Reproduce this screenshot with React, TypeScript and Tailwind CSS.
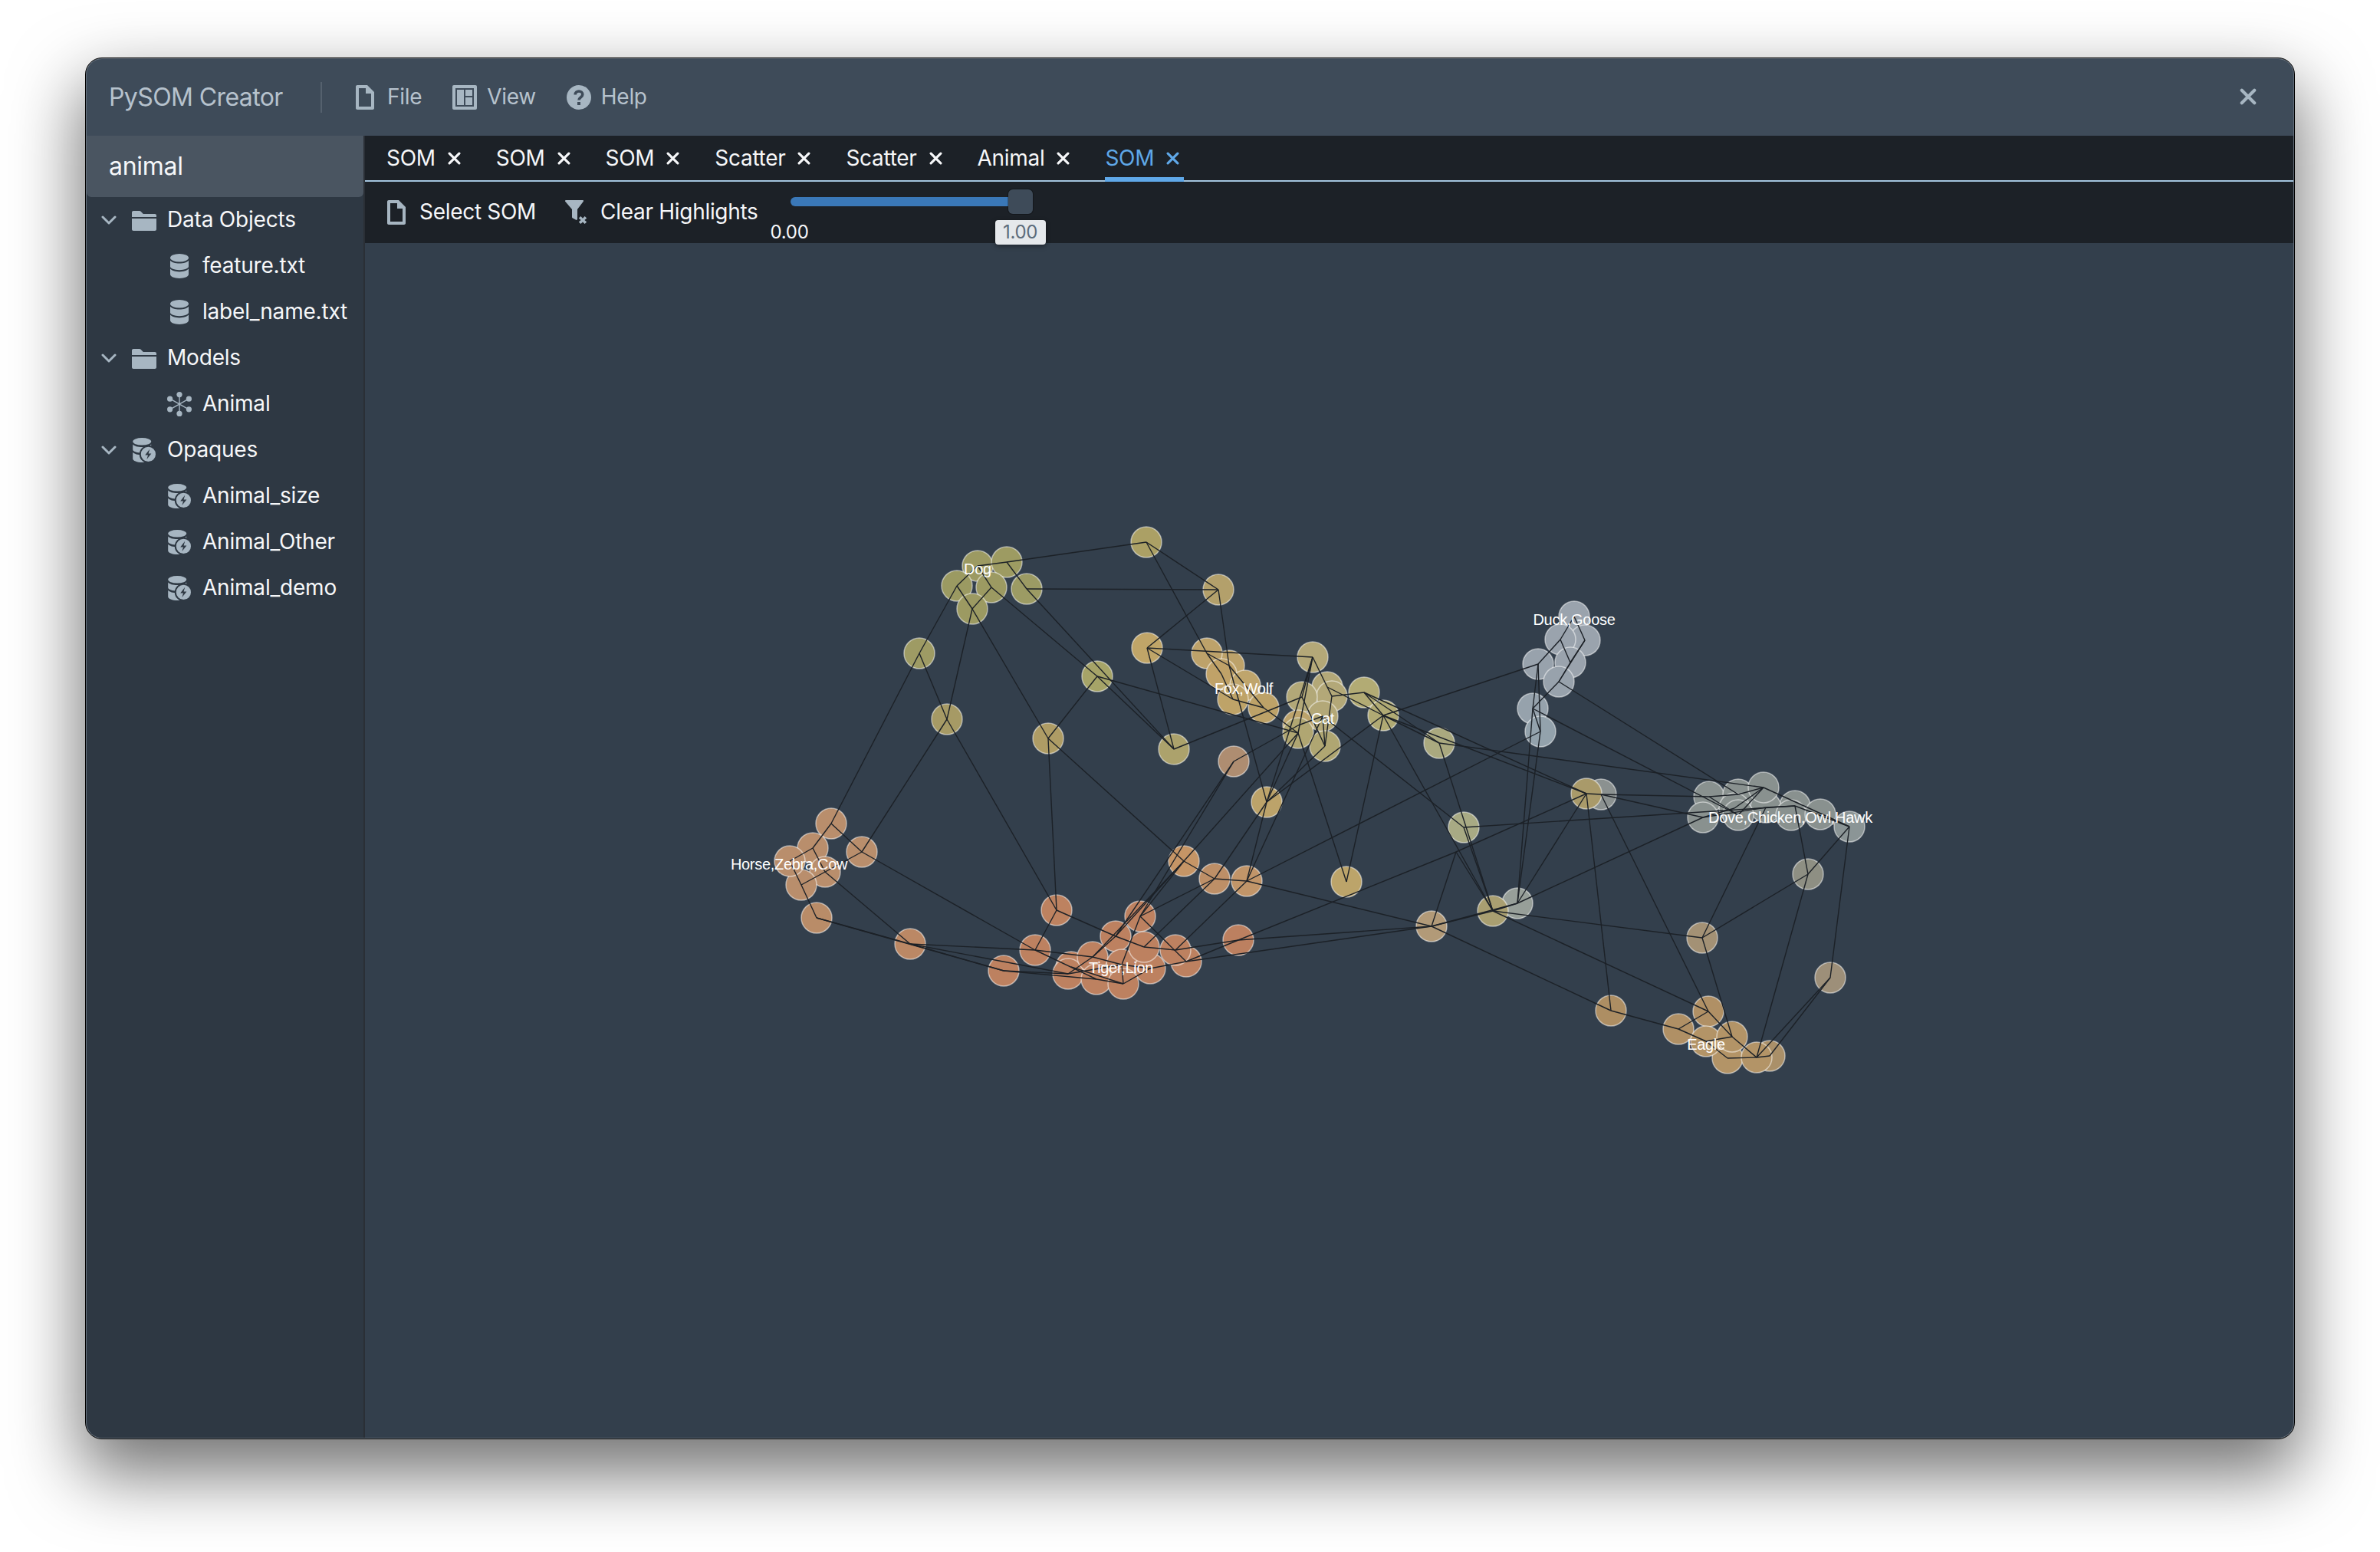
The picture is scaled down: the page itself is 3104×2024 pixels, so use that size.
import React from "react";

const nodes: Record<string, [number, number, string]> = {
  a: [1275, 737, "#9c9a62"], b: [1313, 732, "#9d9b62"], c: [1248, 763, "#9b9a62"], d: [1293, 765, "#9c9a62"],
  e: [1339, 767, "#9c9b64"], f: [1268, 793, "#9c9a62"], g: [1199, 851, "#9e9b64"], h: [1235, 937, "#a69a65"],
  i: [1367, 962, "#ae9c65"], A: [1495, 706, "#aba065"], B: [1589, 768, "#b3a06b"], C: [1496, 844, "#c0a568"],
  D: [1431, 881, "#a6a468"], F: [1603, 867, "#bda26a"], E: [1574, 851, "#bda26a"], G: [1593, 878, "#c0a268"],
  H: [1624, 893, "#bfa56c"], I: [1608, 911, "#bea368"], J: [1648, 922, "#bda268"], K: [1712, 856, "#b4a878"],
  L: [1731, 895, "#b3a878"], N: [1737, 907, "#b3a878"], M: [1698, 908, "#b2a878"], Q: [1725, 933, "#b3a878"],
  R: [1693, 945, "#bca36c"], S: [1693, 955, "#b0a672"], T: [1728, 972, "#afa672"], O: [1779, 902, "#b2ab74"],
  P: [1804, 932, "#b0aa74"], U: [1531, 976, "#aca26c"], V: [1609, 992, "#ae8d71"], W: [1652, 1045, "#bca36a"],
  X: [1877, 968, "#aaa97f"],
  Y1: [2053, 803, "#9aa3ad"], Y2: [2067, 834, "#9aa3ad"], Y3: [2035, 833, "#9aa3ad"], Y4: [2048, 863, "#9aa3ad"],
  Y5: [2006, 865, "#98a2ac"], Y6: [2033, 888, "#98a2ac"], Y7: [1999, 923, "#96a2ac"], Y8: [2009, 953, "#93a2ac"],
  Z2: [2088, 1035, "#8b9190"], Z1: [2069, 1034, "#a99a6a"], Z3: [1909, 1078, "#a8aa84"],
  D1: [2229, 1038, "#89918f"], D2: [2267, 1035, "#89918f"], D6: [2341, 1050, "#89918f"], D5: [2303, 1052, "#89918f"],
  D4: [2262, 1053, "#89918f"], D3: [2300, 1026, "#89918f"], D7: [2221, 1065, "#89918f"], D8: [2267, 1062, "#89918f"],
  D10: [2336, 1062, "#89918f"], D11: [2374, 1061, "#89918f"], D12: [2412, 1077, "#8b9596"], D13: [2358, 1139, "#8e8f83"],
  Z4: [1979, 1177, "#979f99"], Z5: [1947, 1187, "#a99f71"], E1: [2220, 1222, "#a39175"], E2: [2387, 1274, "#9d8f79"],
  E3: [2101, 1317, "#ad8e63"], E4: [2228, 1318, "#b09065"], E5: [2189, 1341, "#b09065"], E10: [2308, 1376, "#aa9069"],
  E8: [2253, 1379, "#b39467"], E6: [2225, 1357, "#b39467"], E7: [2259, 1351, "#b39467"], E9: [2291, 1378, "#b39467"],
  H1: [1084, 1073, "#b98e6c"], H2: [1060, 1105, "#b98e6c"], H5: [1076, 1136, "#b98e6c"], H4: [1124, 1110, "#b98e6c"],
  H6: [1045, 1153, "#b98e6c"], H3: [1030, 1122, "#b98e6c"], H7: [1065, 1196, "#b98c68"], H8: [1187, 1230, "#bb8865"],
  H9: [1309, 1265, "#bd8160"], H10: [1350, 1238, "#bd8160"], H11: [1378, 1186, "#bd8260"],
  O1: [1544, 1122, "#c59566"], O2: [1584, 1145, "#bd8f67"], O3: [1626, 1148, "#c19569"], O4: [1756, 1149, "#bca46a"],
  O5: [1867, 1207, "#b29a78"], T8: [1615, 1225, "#bc8060"], T4: [1487, 1194, "#bd8160"], T3: [1455, 1220, "#bd8160"],
  T2: [1397, 1260, "#bd8160"], T1: [1393, 1269, "#bd8160"], T5: [1425, 1247, "#bd8160"], T11: [1463, 1257, "#bd8160"],
  T9: [1547, 1253, "#bd8160"], T10: [1500, 1262, "#bd8160"], T6: [1492, 1234, "#bd8160"], T7: [1533, 1238, "#bd8160"],
  T12: [1430, 1276, "#bd8160"], T13: [1465, 1282, "#bd8160"],
};

// the junction with no circle of its own
const points: Record<string, [number, number]> = { vx: [1899, 1110] };

const edges = `a-b b-A a-c a-d c-f d-f b-e e-B e-U d-D D-U c-g g-H1 g-h f-h f-i h-H4 h-H11 i-H11 i-D i-O1
A-B A-E B-C B-F F-W C-K C-U C-I E-F E-G G-I F-J I-J J-S D-S U-M M-T M-K K-S K-W K-L L-N L-P N-O O-P O-X P-X
N-T Q-T Q-O3 R-V R-Q S-W T-W V-T4 V-T3 S-O1 W-O2 W-O3 P-W P-Y5 S-O4 P-O4 Q-Z3 P-Z5 X-Z5 Z3-Z5 T8-vx O5-vx vx-Z1 vx-Z5
Y1-Y2 Y1-Y3 Y3-Y4 Y2-Y4 Y3-Y5 Y2-Y6 Y4-Y6 Y5-Y7 Y6-Y7 Y7-Y8 Y5-Y8 Y7-Z4 Y8-Z4 Y8-O3 Y6-D2 Y7-D8
O-Z1 P-Z1 X-D3 Z3-D6 Z1-Z2 Z2-D1 Z2-D7 Z1-Z4 Z1-E3 Z2-E4 Z4-Z5 Z4-D7 Z5-E1 Z5-E4 O5-Z4 O5-Z5 O5-E3
E3-E5 E5-E4 E5-E6 E4-E7 E1-E7 E1-D13 E1-D5 D13-D6 D13-D12 D13-E9 D12-E2 E2-E9 E2-E10 E10-E9 E9-E8 E9-E7 E8-E6 E6-E7
D1-D2 D2-D3 D3-D4 D3-D12 D4-D7 D7-D5 D5-D6 D1-D8 D8-D3 D6-D12
H1-H2 H1-H4 H2-H3 H2-H5 H3-H6 H6-H7 H6-H4 H5-H8 H4-H10 H7-H8 H7-H9 H8-H9 H8-H10 H8-T1 H10-H11 H10-T5 H9-T1 H9-T12
H11-T3 T3-T6 T6-T7 T7-T8 O1-O2 O2-O3 O3-O5 T4-O2 T4-T9 T4-T11 T6-O2 T7-O3 T11-T10 T10-T9 T13-T10 T13-T11 T13-T12
T5-T11 T5-T3 T3-O1 T5-O1 T9-O5 T8-O5 T1-T5 T1-T11 T2-T13 T4-O1 H10-T12 T9-T8`
  .split(/\s+/)
  .map((edge) => edge.split("-"));

const labels: [string, number, number][] = [
  ["Dog", 1275, 748],
  ["Fox,Wolf", 1622, 904],
  ["Cat", 1725, 943],
  ["Duck,Goose", 2053, 814],
  ["Dove,Chicken,Owl,Hawk", 2335, 1072],
  ["Horse,Zebra,Cow", 1029, 1133],
  ["Tiger,Lion", 1462, 1268],
  ["Eagle", 2225, 1368],
];

const at = (name: string) => points[name] ?? nodes[name];

const SomGraph = () => (
  <svg className="block w-[2515px] h-[1558px]" viewBox="476 316 2515 1558">
    {Object.entries(nodes).map(([name, [x, y, fill]]) => (
      <circle key={name} cx={x} cy={y} r={20} fill={fill} stroke="#ffffff" strokeOpacity={0.5} strokeWidth={1.5} />
    ))}
    {edges.map(([from, to]) => (
      <line
        key={from + to}
        x1={at(from)[0]}
        y1={at(from)[1]}
        x2={at(to)[0]}
        y2={at(to)[1]}
        stroke="#1c2127"
        strokeWidth={1.4}
      />
    ))}
    {labels.map(([text, x, y]) => (
      <text key={text} x={x} y={y} textAnchor="middle" fontSize={20} fill="#ffffff" fontFamily="'Liberation Sans', sans-serif">
        {text}
      </text>
    ))}
  </svg>
);

const DocIcon = () => (
  <svg className="w-8 h-8 text-[#a7b6c2]" viewBox="0 0 16 16" fill="currentColor">
    <path d="M9.5 0H3c-.55 0-1 .45-1 1v14c0 .55.45 1 1 1h10c.55 0 1-.45 1-1V4.5L9.5 0zM12 14H4V2h4.5v3.5H12V14z" />
  </svg>
);

const ViewIcon = () => (
  <svg className="w-8 h-8" viewBox="0 0 16 16">
    <rect width="16" height="16" rx="1" fill="#a7b6c2" />
    <rect x="2" y="2" width="12" height="12" fill="#3e4b59" />
    <rect x="3" y="3" width="4.5" height="10" fill="#a7b6c2" />
    <rect x="8.5" y="3" width="4.5" height="4" fill="#a7b6c2" />
    <rect x="8.5" y="8" width="4.5" height="5" fill="#a7b6c2" />
  </svg>
);

const HelpIcon = () => (
  <svg className="w-8 h-8" viewBox="0 0 16 16">
    <circle cx="8" cy="8" r="8" fill="#a7b6c2" />
    <path d="M5.6 6.2C5.6 4.8 6.7 4 8 4s2.4.8 2.4 2.1c0 1.7-2.4 1.9-2.4 3.6" fill="none" stroke="#3e4b59" strokeWidth="1.8" />
    <rect x="7" y="11" width="2" height="2" fill="#3e4b59" />
  </svg>
);

const FilterRemoveIcon = () => (
  <svg className="w-8 h-8" viewBox="0 0 16 16" fill="#a7b6c2">
    <path d="M.5 0h11c.4 0 .7.5.4.9L8 6v6.4c0 .4-.5.7-.9.5L5 11.8c-.3-.1-.5-.4-.5-.7V6L.1.9C-.2.5.1 0 .5 0z" />
    <path d="M10.2 11l1.3 1.4 1.3-1.4 1.3 1.2-1.4 1.3 1.4 1.3-1.3 1.2-1.3-1.3-1.3 1.3-1.3-1.2 1.4-1.3-1.4-1.3z" transform="translate(0 -.5)" />
  </svg>
);

const FolderIcon = () => (
  <svg className="w-8 h-8 text-[#a7b6c2]" viewBox="0 0 16 16" fill="currentColor">
    <path d="M0 14c0 .55.45 1 1 1h14c.55 0 1-.45 1-1V7H0v7zm15-10H7.4L5.7 2.3A1 1 0 005 2H1c-.55 0-1 .45-1 1v3h16V5c0-.55-.45-1-1-1z" />
  </svg>
);

const DatabaseIcon = () => (
  <svg className="w-8 h-8 text-[#a7b6c2]" viewBox="0 0 16 16" fill="currentColor">
    <ellipse cx="8" cy="2.6" rx="6" ry="2.6" />
    <path d="M2 4.4v3.9c0 1.3 2.7 2.3 6 2.3s6-1 6-2.3V4.4c-.9 1.2-3.2 1.9-6 1.9s-5.1-.7-6-1.9z" />
    <path d="M2 9.8v3.6C2 14.8 4.7 16 8 16s6-1.2 6-2.6V9.8c-.9 1.2-3.2 1.9-6 1.9s-5.1-.7-6-1.9z" />
  </svg>
);

const SnowflakeIcon = () => (
  <svg className="w-8 h-8 text-[#a7b6c2]" viewBox="0 0 16 16" fill="currentColor" stroke="currentColor">
    <path d="M8 2v12M2.4 4.8l11.2 6.4M13.6 4.8L2.4 11.2" strokeWidth="0.7" />
    <circle cx="8" cy="1.8" r="1.8" stroke="none" />
    <circle cx="8" cy="14.2" r="1.8" stroke="none" />
    <circle cx="1.8" cy="4.6" r="1.8" stroke="none" />
    <circle cx="14.2" cy="4.6" r="1.8" stroke="none" />
    <circle cx="1.8" cy="11.4" r="1.8" stroke="none" />
    <circle cx="14.2" cy="11.4" r="1.8" stroke="none" />
  </svg>
);

const OpaqueIcon = () => (
  <svg className="w-8 h-8 text-[#a7b6c2]" viewBox="0 0 16 16" fill="currentColor">
    <ellipse cx="6.6" cy="2.4" rx="6" ry="2.4" />
    <path d="M.6 4.2v3.4c0 1.2 2.7 2.2 6 2.2s6-1 6-2.2V4.2c-.9 1.1-3.2 1.8-6 1.8s-5.1-.7-6-1.8z" />
    <path d="M.6 9.4v4.2c0 1.3 2.7 2.4 6 2.4s6-1.1 6-2.4V9.4c-.9 1.1-3.2 1.8-6 1.8s-5.1-.7-6-1.8z" />
    <circle cx="10.7" cy="10.7" r="5.3" stroke="#2e3843" strokeWidth="1" />
    <path d="M11.6 7.4L8.6 11.2h1.9L9.7 14l3-3.8h-1.9z" fill="#2e3843" />
  </svg>
);

const Chevron = () => (
  <svg className="w-5 h-5 text-[#a7b6c2]" viewBox="0 0 20 20" fill="none" stroke="currentColor" strokeWidth="3" strokeLinecap="round" strokeLinejoin="round">
    <path d="M2 6l8 8 8-8" />
  </svg>
);

const CloseX = ({ className }: { className: string }) => (
  <svg className={className} viewBox="0 0 16 16" fill="none" stroke="currentColor" strokeWidth="3" strokeLinecap="round">
    <path d="M2 2l12 12M14 2L2 14" />
  </svg>
);

const TreeFolder = ({ icon, label }: { icon: React.ReactNode; label: string }) => (
  <div className="flex items-center h-[60px] pl-[19px]">
    <Chevron />
    <div className="ml-[20px] w-8 flex justify-center">{icon}</div>
    <span className="ml-[14px] pb-[2px] text-[28px] tracking-[-0.2px] text-[#f6f7f9]">{label}</span>
  </div>
);

const TreeLeaf = ({ icon, label }: { icon: React.ReactNode; label: string }) => (
  <div className="flex items-center h-[60px] pl-[105px]">
    {icon}
    <span className="ml-[14px] pb-[2px] text-[28px] tracking-[-0.2px] text-[#f6f7f9]">{label}</span>
  </div>
);

const tabs = ["SOM", "SOM", "SOM", "Scatter", "Scatter", "Animal"];

const MenuItem = ({ icon, label }: { icon: React.ReactNode; label: string }) => (
  <div className="flex items-center gap-[13px] mr-[40px] text-[28px] text-[#b6c2cd]">
    {icon}
    <span className="pb-[2px]">{label}</span>
  </div>
);

const App = () => {
  return (
    <div className="w-[3104px] h-[2024px] bg-white pl-[111px] pt-[75px] font-['Inter',sans-serif] tracking-[-0.3px]">
      <div className="w-[2882px] h-[1802px] rounded-[22px] bg-[#66717d] border border-black p-px shadow-[0_40px_90px_6px_rgba(0,0,0,0.55)]">
        <div className="w-full h-full rounded-[20px] overflow-hidden flex flex-col">
          <div className="h-[100px] bg-[#3e4b59] flex items-center pl-[29px] pr-[48px]">
            <span className="text-[32px] tracking-[-0.6px] text-[#b6c2cd] w-[276px]">PySOM Creator</span>
            <div className="w-[2px] h-10 bg-[#55616e] mr-[40px]" />
            <MenuItem icon={<DocIcon />} label="File" />
            <MenuItem icon={<ViewIcon />} label="View" />
            <MenuItem icon={<HelpIcon />} label="Help" />
            <CloseX className="w-[22px] h-[22px] ml-auto mb-[2px] text-[#a7b6c2]" />
          </div>
          <div className="flex-1 flex min-h-0">
            <div className="w-[363px] bg-[#2e3843] border-r-2 border-[#2a2f36] shrink-0">
              <div className="h-[80px] bg-[#4a5561] rounded-b-md flex items-center pl-[29px] text-[32px] text-[#f6f7f9]">
                animal
              </div>
              <TreeFolder icon={<FolderIcon />} label="Data Objects" />
              <TreeLeaf icon={<DatabaseIcon />} label="feature.txt" />
              <TreeLeaf icon={<DatabaseIcon />} label="label_name.txt" />
              <TreeFolder icon={<FolderIcon />} label="Models" />
              <TreeLeaf icon={<SnowflakeIcon />} label="Animal" />
              <TreeFolder icon={<OpaqueIcon />} label="Opaques" />
              <TreeLeaf icon={<OpaqueIcon />} label="Animal_size" />
              <TreeLeaf icon={<OpaqueIcon />} label="Animal_Other" />
              <TreeLeaf icon={<OpaqueIcon />} label="Animal_demo" />
            </div>
            <div className="flex-1 flex flex-col bg-[#333f4c] min-w-0">
              <div className="h-[60px] bg-[#1c2127] border-b-2 border-[#a3c4de] flex items-stretch pl-[28px] gap-[46px] text-[28px] text-[#f6f7f9]">
                {tabs.map((tab, i) => (
                  <div key={i} className="flex items-center gap-[16px]">
                    <span>{tab}</span>
                    <CloseX className="w-[17px] h-[17px]" />
                  </div>
                ))}
                <div className="relative flex items-center gap-[16px] text-[#5fa8e8]">
                  <span>SOM</span>
                  <CloseX className="w-[17px] h-[17px]" />
                  <div className="absolute left-0 right-[-6px] bottom-[-2px] h-[6px] bg-[#5fa8e8]" />
                </div>
              </div>
              <div className="h-[80px] bg-[#1c2127] flex items-center pl-[25px] text-[28px] text-[#f6f7f9]">
                <DocIcon />
                <span className="ml-[14px] pb-[2px]">Select SOM</span>
                <div className="ml-[38px] flex">
                  <FilterRemoveIcon />
                </div>
                <span className="ml-[14px] pb-[2px]">Clear Highlights</span>
                <div className="relative ml-[42px] w-[316px] h-[32px] self-start mt-[10px] flex items-center">
                  <div className="w-[284px] h-[12px] rounded-l-md bg-[#3a78b8]" />
                  <div className="w-[32px] h-[32px] rounded-md bg-[#3e4b59] shadow-[0_0_0_1px_rgba(0,0,0,0.3)]" />
                  <span className="absolute left-[-26px] top-[44px] text-[24px] leading-[24px] text-[#f6f7f9]">0.00</span>
                  <span className="absolute left-[267px] top-[40px] w-[66px] h-[32px] rounded bg-[#e5e8eb] text-[#5c6b7a] text-[24px] leading-[32px] text-center shadow-[0_2px_6px_rgba(0,0,0,0.4)]">
                    1.00
                  </span>
                </div>
              </div>
              <SomGraph />
            </div>
          </div>
        </div>
      </div>
    </div>
  );
};

export default App;
